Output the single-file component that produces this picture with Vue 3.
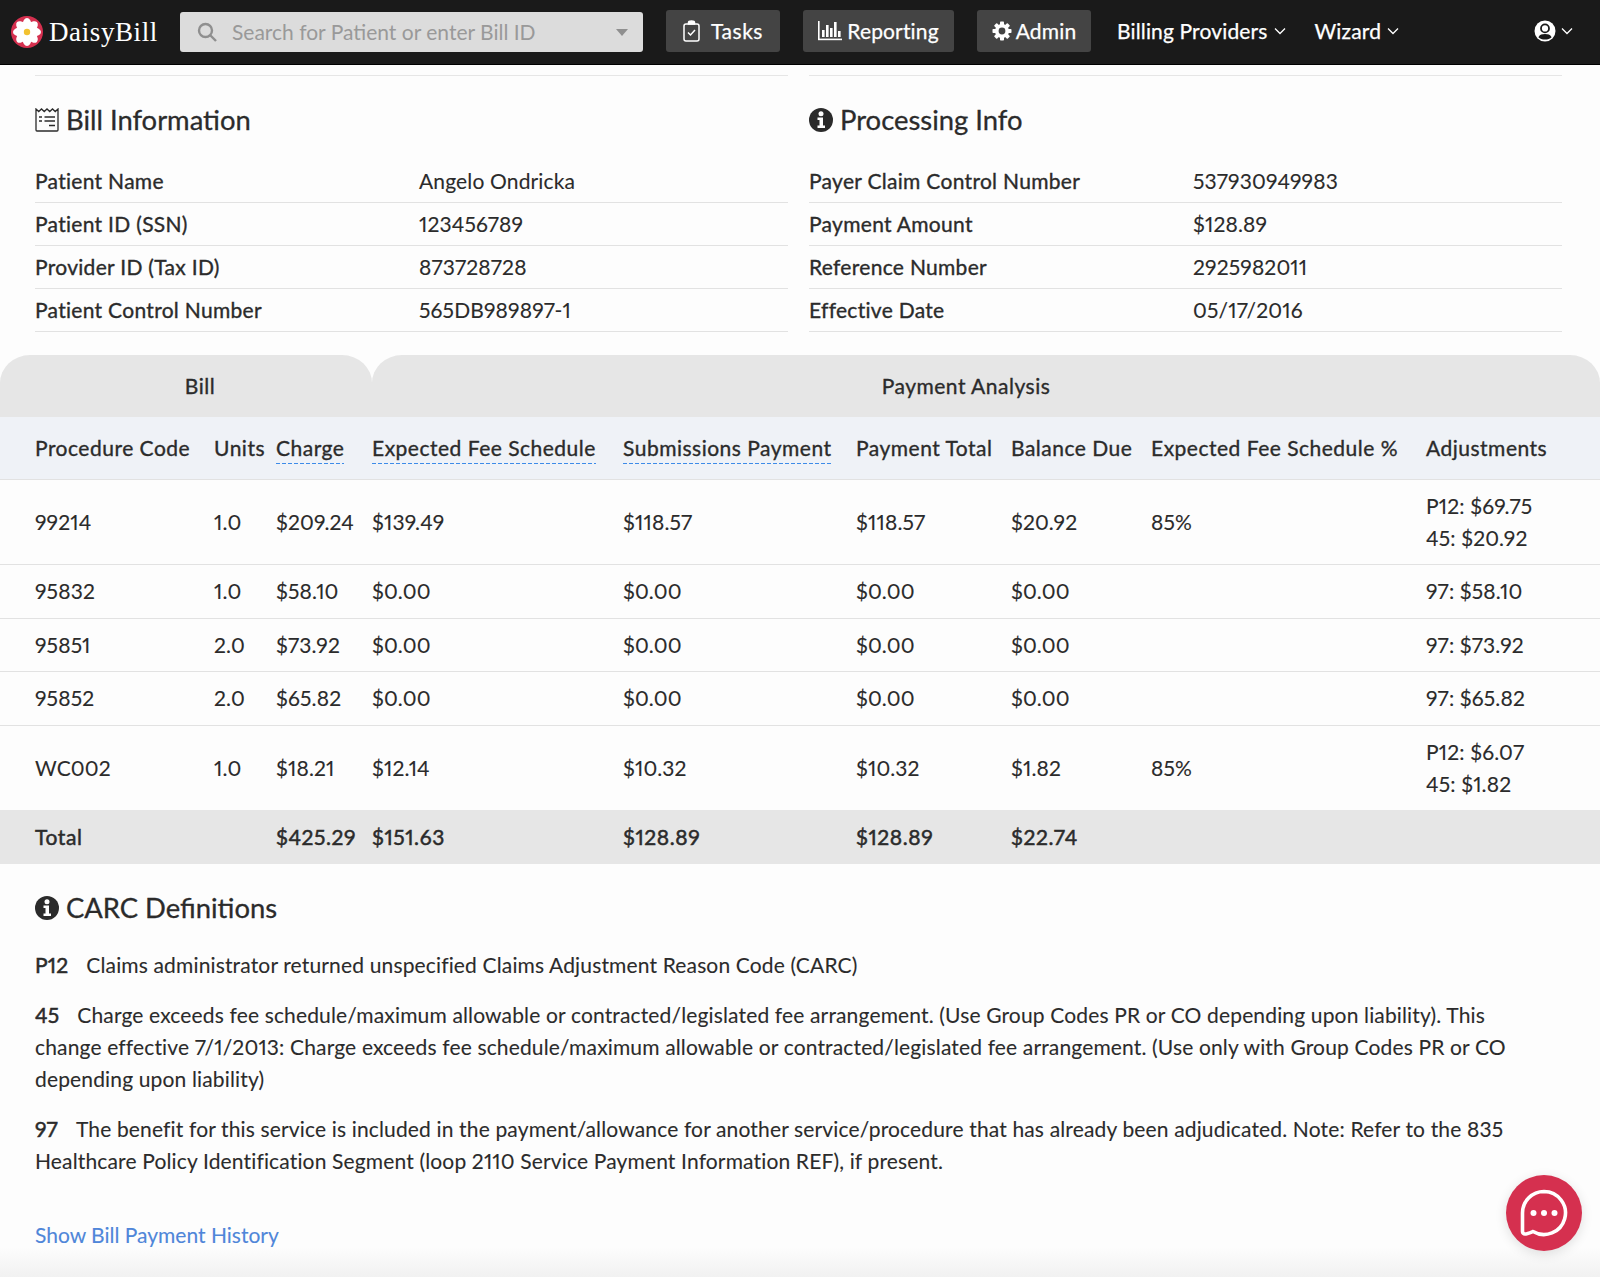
<script setup>
const info = [
  ['Patient Name', 'Angelo Ondricka'],
  ['Patient ID (SSN)', '123456789'],
  ['Provider ID (Tax ID)', '873728728'],
  ['Patient Control Number', '565DB989897-1'],
]
const proc = [
  ['Payer Claim Control Number', '537930949983'],
  ['Payment Amount', '$128.89'],
  ['Reference Number', '2925982011'],
  ['Effective Date', '05/17/2016'],
]
const heads = [
  ['Procedure Code', false], ['Units', false], ['Charge', true], ['Expected Fee Schedule', true],
  ['Submissions Payment', true], ['Payment Total', false], ['Balance Due', false],
  ['Expected Fee Schedule %', false], ['Adjustments', false],
]
const rows = [
  { c: ['99214', '1.0', '$209.24', '$139.49', '$118.57', '$118.57', '$20.92', '85%'], adj: ['P12: $69.75', '45: $20.92'] },
  { c: ['95832', '1.0', '$58.10', '$0.00', '$0.00', '$0.00', '$0.00', ''], adj: ['97: $58.10'] },
  { c: ['95851', '2.0', '$73.92', '$0.00', '$0.00', '$0.00', '$0.00', ''], adj: ['97: $73.92'] },
  { c: ['95852', '2.0', '$65.82', '$0.00', '$0.00', '$0.00', '$0.00', ''], adj: ['97: $65.82'] },
  { c: ['WC002', '1.0', '$18.21', '$12.14', '$10.32', '$10.32', '$1.82', '85%'], adj: ['P12: $6.07', '45: $1.82'] },
]
const total = ['Total', '', '$425.29', '$151.63', '$128.89', '$128.89', '$22.74', '', '']
const petals = [0, 45, 90, 135, 180, 225, 270, 315]
</script>

<template>
  <div class="page">
    <header class="nav">
      <div class="brand">
        <svg class="logo" viewBox="0 0 32 32">
          <circle cx="16" cy="16" r="16" fill="#d5304f" />
          <ellipse v-for="p in petals" :key="p" cx="16" cy="8.6" rx="4.4" ry="6.6" fill="#fff" :transform="`rotate(${p} 16 16)`" />
          <circle cx="16" cy="16" r="3.2" fill="#f2c230" />
        </svg>
        <span class="brand-name">DaisyBill</span>
      </div>
      <div class="search">
        <svg class="search-icon" viewBox="0 0 20 20" fill="none" stroke="#8f8f8f" stroke-width="2.4">
          <circle cx="8.5" cy="8.5" r="6.5" /><path d="M13.5 13.5L19 19" />
        </svg>
        <span class="placeholder">Search for Patient or enter Bill ID</span>
        <span class="caret"></span>
      </div>
      <a class="nav-btn tasks">
        <svg width="17" height="22" viewBox="0 0 17 22" fill="none" stroke="#fff" stroke-width="1.5">
          <rect x="1" y="4" width="15" height="17" rx="2" />
          <path d="M5.5 4V2.500a3 1.500 0 0 1 6 0V4z" fill="#fff" />
          <path d="M5 12.500l2.500 2.500L12 10" />
        </svg>
        Tasks
      </a>
      <a class="nav-btn reporting">
        <svg width="24" height="20" viewBox="0 0 24 20" fill="#fff">
          <rect x="0" y="0" width="1.6" height="19" /><rect x="0" y="17.6" width="24" height="1.6" />
          <rect x="4" y="9" width="2.6" height="7" /><rect x="8" y="4" width="2.6" height="12" />
          <rect x="12" y="7" width="2.6" height="9" /><rect x="16" y="1" width="2.6" height="15" />
          <rect x="20" y="10" width="2.6" height="6" />
        </svg>
        Reporting
      </a>
      <a class="nav-btn admin">
        <svg width="20" height="20" viewBox="0 0 20 20">
          <g fill="#fff">
            <rect v-for="a in [0,45,90,135,180,225,270,315]" :key="a" x="8" y="0.5" width="4" height="5" rx="0.8" :transform="`rotate(${a} 10 10)`" />
          </g>
          <circle cx="10" cy="10" r="5.2" fill="none" stroke="#fff" stroke-width="3.6" />
        </svg>
        Admin
      </a>
      <a class="nav-link billing">Billing Providers
        <svg class="chev" viewBox="0 0 12 8" fill="none" stroke="#fff" stroke-width="1.3"><path d="M1 1.5l5 5 5-5" /></svg>
      </a>
      <a class="nav-link wizard">Wizard
        <svg class="chev" viewBox="0 0 12 8" fill="none" stroke="#fff" stroke-width="1.3"><path d="M1 1.5l5 5 5-5" /></svg>
      </a>
      <a class="nav-link user">
        <svg width="22" height="22" viewBox="0 0 22 22">
          <circle cx="11" cy="11" r="10.500" fill="#fff" />
          <circle cx="11" cy="8.400" r="4" fill="#fff" stroke="#1a1a1a" stroke-width="1.800" />
          <path d="M4.400 17.200C5.800 14.600 8 14 11 14s5.200.6 6.600 3.200C16 18.900 13.800 19.600 11 19.600s-5-.7-6.600-2.400z" fill="#1a1a1a" />
        </svg>
        <svg class="chev" viewBox="0 0 12 8" fill="none" stroke="#fff" stroke-width="1.3"><path d="M1 1.5l5 5 5-5" /></svg>
      </a>
    </header>

    <section class="info">
      <div class="info-col">
        <h2 class="heading">
          <svg width="24" height="24" viewBox="0 0 24 24" fill="none" stroke="#2b2b2b" stroke-width="1.300">
            <path d="M1 1l2.750 2.500L6.500 1l2.750 2.500L12 1l2.750 2.500L17.500 1l2.750 2.500L23 1v21a1 1 0 0 1-1 1H2a1 1 0 0 1-1-1z" />
            <path d="M4 9h3M9.500 9H20M4 13h3M9.500 13H20M14 17.500h6" stroke-width="1.700" />
          </svg>
          Bill Information
        </h2>
        <div v-for="r in info" :key="r[0]" class="info-row"><b>{{ r[0] }}</b><span>{{ r[1] }}</span></div>
      </div>
      <div class="info-col">
        <h2 class="heading">
          <svg class="info-icon" viewBox="0 0 24 24"><circle cx="12" cy="12" r="12" fill="#2b2b2b" /><circle cx="12" cy="5.800" r="2.500" fill="#fff" /><path d="M8.500 9.500h5.500v8h2v2.500H8.500v-2.500h2v-5.500h-2z" fill="#fff" /></svg>
          Processing Info
        </h2>
        <div v-for="r in proc" :key="r[0]" class="info-row"><b>{{ r[0] }}</b><span>{{ r[1] }}</span></div>
      </div>
    </section>

    <section class="table">
      <div class="tabs">
        <div class="tab bill-tab">Bill</div>
        <div class="tab pay-tab">Payment Analysis</div>
      </div>
      <div class="grid head-row">
        <div v-for="h in heads" :key="h[0]"><span :class="{ dashed: h[1] }">{{ h[0] }}</span></div>
      </div>
      <div v-for="r in rows" :key="r.c[0]" class="grid body-row" :class="{ tall: r.adj.length > 1 }">
        <div v-for="(v, i) in r.c" :key="i">{{ v }}</div>
        <div class="adj"><div v-for="a in r.adj" :key="a">{{ a }}</div></div>
      </div>
      <div class="grid total-row">
        <div v-for="(t, i) in total" :key="i">{{ t }}</div>
      </div>
    </section>

    <section class="carc">
      <h2 class="heading">
        <svg class="info-icon" viewBox="0 0 24 24"><circle cx="12" cy="12" r="12" fill="#2b2b2b" /><circle cx="12" cy="5.800" r="2.500" fill="#fff" /><path d="M8.500 9.500h5.500v8h2v2.500H8.500v-2.500h2v-5.500h-2z" fill="#fff" /></svg>
        CARC Definitions
      </h2>
      <p><b class="code">P12</b>Claims administrator returned unspecified Claims Adjustment Reason Code (CARC)</p>
      <p><b class="code">45</b>Charge exceeds fee schedule/maximum allowable or contracted/legislated fee arrangement. (Use Group Codes PR or CO depending upon liability). This change effective 7/1/2013: Charge exceeds fee schedule/maximum allowable or contracted/legislated fee arrangement. (Use only with Group Codes PR or CO depending upon liability)</p>
      <p><b class="code">97</b>The benefit for this service is included in the payment/allowance for another service/procedure that has already been adjudicated. Note: Refer to the 835 Healthcare Policy Identification Segment (loop 2110 Service Payment Information REF), if present.</p>
      <a class="history">Show Bill Payment History</a>
    </section>

    <div class="fade"></div>
    <button class="chat">
      <svg width="50" height="50" viewBox="0 0 50 50" fill="none">
        <path d="M25 3.500a21.500 21.500 0 1 1-11 40c-2.500 1-6 2.500-8 2.500-1.500 0-2.500-1-2.500-2.500V25A21.500 21.500 0 0 1 25 3.500z" stroke="#fff" stroke-width="3.600" stroke-linejoin="round" />
        <circle cx="14.500" cy="25" r="3" fill="#fff" /><circle cx="25" cy="25" r="3" fill="#fff" /><circle cx="35.500" cy="25" r="3" fill="#fff" />
      </svg>
    </button>
  </div>
</template>

<style scoped>
.page {
  position: relative;
  width: 1600px;
  height: 1277px;
  overflow: hidden;
  background: #fdfdfd;
  color: #2b2b2b;
  font-family: Lato, "Open Sans", sans-serif;
  font-size: 21px;
  letter-spacing: 0.15px;
  font-variant-numeric: proportional-nums;
  -webkit-text-stroke: 0.1px currentColor;
  line-height: 32px;
}
.nav {
  height: 65px;
  box-sizing: border-box;
  background: #1a1a1a;
  border-bottom: 1px solid #000;
  display: flex;
  align-items: flex-start;
  color: #fff;
  -webkit-text-stroke: 0.25px #fff;
}
.brand {
  width: 180px;
  height: 64px;
  padding-left: 11px;
  box-sizing: border-box;
  display: flex;
  align-items: center;
  gap: 6px;
}
.logo { width: 32px; height: 32px; flex: none; }
.brand-name {
  font-family: "Liberation Serif", serif;
  font-size: 27px;
  letter-spacing: 0.6px;
  margin-top: -1px;
  -webkit-text-stroke: 0;
}
.search {
  width: 463px;
  height: 40px;
  margin-top: 12px;
  background: #dcdcdc;
  border-radius: 3px;
  display: flex;
  align-items: center;
  padding: 0 15px 0 17px;
  box-sizing: border-box;
  -webkit-text-stroke: 0;
  letter-spacing: 0;
}
.search-icon { width: 20px; height: 20px; flex: none; }
.placeholder { margin-left: 15px; color: #999; flex: 1; }
.caret {
  width: 0;
  height: 0;
  border-left: 6px solid transparent;
  border-right: 6px solid transparent;
  border-top: 7px solid #8f8f8f;
}
.nav-btn {
  height: 42px;
  margin-top: 10px;
  background: #444;
  border-radius: 3px;
  display: flex;
  align-items: center;
  justify-content: center;
  gap: 11px;
}
.tasks { width: 114px; margin-left: 23px; letter-spacing: 0.5px; }
.reporting { width: 151px; margin-left: 23px; gap: 5px; }
.admin { width: 114px; margin-left: 23px; gap: 4px; }
.nav-link {
  height: 42px;
  margin-top: 10px;
  display: flex;
  align-items: center;
  gap: 6px;
}
.billing { margin-left: 26px; }
.wizard { margin-left: 29px; }
.user { margin-left: auto; margin-right: 27px; gap: 5px; }
.chev { width: 12px; height: 8px; }

.info {
  display: flex;
  gap: 21px;
  padding: 10px 38px 0 35px;
}
.info-col { flex: 1; border-top: 1px solid #e6e6e6; }
.heading {
  display: flex;
  align-items: center;
  gap: 7px;
  margin: 0;
  font-size: 27.4px;
  letter-spacing: 0;
  font-weight: 400;
  -webkit-text-stroke: 0.3px #2b2b2b;
  line-height: 32px;
  padding-top: 28px;
  padding-bottom: 24px;
}
.info-icon { width: 24px; height: 24px; }
.info-row {
  display: flex;
  height: 43px;
  box-sizing: border-box;
  border-bottom: 1px solid #e2e2e2;
  align-items: center;
}
.info-row b { width: 384px; font-weight: 400; letter-spacing: 0.3px; -webkit-text-stroke: 0.35px #2b2b2b; }

.table { margin-top: 23px; }
.tabs { display: flex; height: 62px; }
.tab {
  background: #e6e6e6;
  border-radius: 30px 30px 0 0 / 28px 28px 0 0;
  display: flex;
  align-items: center;
  justify-content: center;
  letter-spacing: 0.5px;
  -webkit-text-stroke: 0.35px #2b2b2b;
}
.bill-tab { width: 372px; padding-left: 28px; box-sizing: border-box; }
.pay-tab { flex: 1; padding-right: 40px; }
.grid {
  display: grid;
  grid-template-columns: 179px 62px 96px 251px 233px 155px 140px 275px 139px;
  padding-left: 35px;
  align-items: center;
}
.head-row {
  height: 63px;
  background: #eff2f7;
  border-bottom: 1px solid #e2e2e2;
  box-sizing: border-box;
  letter-spacing: 0.5px;
  -webkit-text-stroke: 0.35px #2b2b2b;
  white-space: nowrap;
}
.dashed {
  display: inline-block;
  line-height: 26px;
  padding-bottom: 3px;
  background: repeating-linear-gradient(90deg, #3d8be8 0 4px, transparent 4px 6px) left bottom / 100% 1.5px no-repeat;
}
.body-row {
  height: 53.5px;
  box-sizing: border-box;
  border-bottom: 1px solid #e2e2e2;
  white-space: nowrap;
}
.body-row.tall { height: 85px; }
.body-row.tall:nth-last-child(2) { height: 84px; border-bottom: 0; }
.total-row {
  height: 54px;
  background: #e6e6e6;
  white-space: nowrap;
  letter-spacing: 0.6px;
  -webkit-text-stroke: 0.5px #2b2b2b;
}

.carc { padding: 12px 35px 0; }
.carc .heading { padding-top: 16px; padding-bottom: 25px; }
.carc p { margin: 0 0 18px; width: 1500px; }
.code { font-weight: 400; -webkit-text-stroke: 0.5px #2b2b2b; margin-right: 18px; }
.history { display: block; margin-top: 42px; color: #4f86d9; letter-spacing: 0; }

.fade {
  position: absolute;
  left: 0;
  right: 0;
  bottom: 0;
  height: 30px;
  background: linear-gradient(rgba(240, 240, 240, 0), #f1f1f1);
  pointer-events: none;
}
.chat {
  position: absolute;
  left: 1506px;
  top: 1175px;
  width: 76px;
  height: 76px;
  border: 0;
  padding: 0;
  border-radius: 50%;
  background: #d5304f;
  box-shadow: 0 3px 12px rgba(0, 0, 0, 0.12);
  display: flex;
  align-items: center;
  justify-content: center;
}
</style>
